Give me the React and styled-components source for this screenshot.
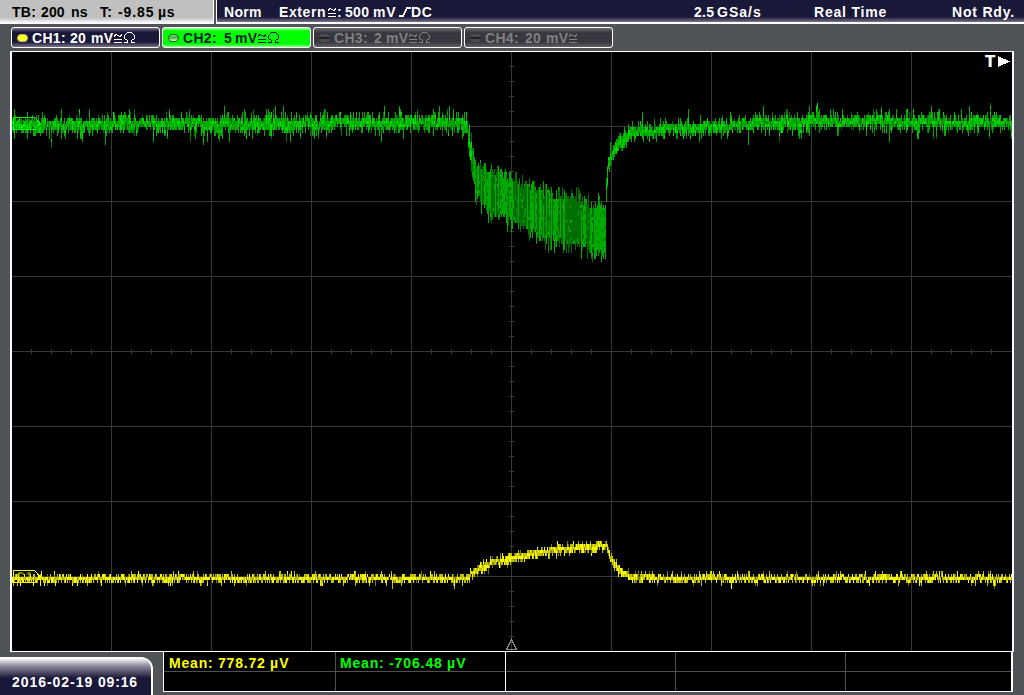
import React from 'react'
import styled, { createGlobalStyle } from 'styled-components'

const PLOT_W = 1000
const PLOT_H = 599
const LEFT = 12
const TOP = 52

// small seeded generator, so the noise is the same on every paint
const makeRandom = (seed) => {
    let s = seed
    return () => {
        s = (s * 1664525 + 1013904223) % 4294967296
        return s / 4294967296
    }
}

// [x, upper edge, lower edge]
const CH2_ENVELOPE = [
    [12, 119, 130], [464, 118, 129], [467, 121, 132], [468, 126, 148], [470, 142, 162],
    [472, 150, 178], [476, 163, 194], [480, 166, 199], [483, 167, 207], [490, 173, 211],
    [500, 176, 216], [510, 178, 217], [520, 184, 223], [527, 187, 229], [540, 192, 236],
    [556, 197, 240], [573, 199, 245], [586, 204, 248], [600, 206, 253], [604, 205, 253],
    [605, 200, 254], [606, 176, 200], [608, 161, 172], [611, 153, 163], [614, 144, 156],
    [618, 136, 148], [626, 130, 141], [640, 126, 136], [660, 125, 135], [700, 122, 132],
    [760, 119, 129], [830, 117, 127], [1012, 118, 128],
]

const CH1_ENVELOPE = [
    [12, 576, 581], [464, 576, 581], [469, 573, 579], [473, 569, 575], [480, 564, 571],
    [493, 558, 565], [510, 556, 563], [527, 552, 559], [547, 548, 555], [573, 545, 552],
    [587, 543, 550], [606, 542, 549], [608, 549, 557], [612, 558, 565], [617, 566, 573],
    [623, 571, 577], [636, 575, 581], [660, 576, 581], [1012, 576, 581],
]

const edgeAt = (envelope, x) => {
    const i = Math.max(1, envelope.findIndex((p) => p[0] >= x))
    const [x0, a0, b0] = envelope[i - 1]
    const [x1, a1, b1] = envelope[i]
    const t = (x - x0) / (x1 - x0)
    return [a0 + (a1 - a0) * t, b0 + (b1 - b0) * t]
}

const buildTrace = (envelope, seed, { spread, limit, bright }) => {
    const rnd = makeRandom(seed)
    const tail = (k) => Math.min(limit, -Math.log(rnd() + 0.001) * k)
    const paths = { dim: '', mid: '', bright: '' }
    let drift = 0
    for (let x = LEFT; x < LEFT + PLOT_W; x += 1) {
        let [a, b] = edgeAt(envelope, x)
        const wide = b - a > 24
        const k = wide ? spread * 1.6 : spread
        drift = drift * 0.6 + (rnd() - 0.5) * spread
        a += drift + rnd() * spread - tail(k)
        b += drift - rnd() * spread + tail(k)
        const start = Math.round((a - TOP) / 3) * 3
        const rows = Math.max(1, Math.round((b - a) / 3))
        const columnDim = rnd() < (wide ? 0.5 : 0.25)
        for (let r = 0; r < rows; r += 1) {
            const middle = 1 - Math.abs((r + 0.5) / rows - 0.5) * 2
            const n = rnd()
            let level = columnDim ? 'dim' : 'mid'
            if (wide) {
                if (n < 0.1) level = columnDim ? 'mid' : 'dim'
            } else if (n < middle * bright) level = 'bright'
            else if (n < 0.85 && middle > 0.4) level = 'mid'
            paths[level] += `M${x - LEFT} ${start + r * 3}h1v3h-1z`
        }
    }
    return paths
}

const ch2 = buildTrace(CH2_ENVELOPE, 77, { spread: 3.3, limit: 14, bright: 0.42 })
const ch1 = buildTrace(CH1_ENVELOPE, 1234, { spread: 1.5, limit: 6, bright: 0.8 })

const range = (n) => Array.from({ length: n }, (_, i) => i)

const Trace = ({ paths, colors }) => (
    <>
        <path d={paths.dim} fill={colors[0]} />
        <path d={paths.mid} fill={colors[1]} />
        <path d={paths.bright} fill={colors[2]} />
    </>
)

const Graticule = () => (
    <g fill="#383838">
        {range(9).map((i) => <rect key={i} x={99 + i * 100} y="0" width="1" height={PLOT_H} />)}
        {range(7).map((i) => <rect key={i} x="0" y={74 + i * 75} width={PLOT_W} height="1" />)}
        {range(39).map((i) => <rect key={i} x="497" y={14 + i * 15} width="5" height="1" />)}
        {range(49).map((i) => <rect key={i} x={19 + i * 20} y="297" width="1" height="5" />)}
    </g>
)

const ChannelTag = ({ y, color, name }) => (
    <g>
        <path d={`M1.5 ${y + 0.5}h21l5.5 6-5.5 6h-21z`} fill="none" stroke={color} />
        <text x="4" y={y + 11} fill={color} opacity="0.55" fontSize="12" letterSpacing="1" fontFamily="Liberation Sans, sans-serif">{name}</text>
    </g>
)

const Coupling = () => (
    <SignIcon width="9" height="12" viewBox="0 0 9 12">
        <path d="M0.5 5V3.5L2.5 2.5L5.5 4.5L7.5 3.5V2M0 7.5H8M0 10.5H8" />
    </SignIcon>
)

const Ohm = () => (
    <SignIcon width="13" height="12" viewBox="0 0 13 12">
        <path d="M1 10.5H4.5V8.5L1.5 6.5V3.5L4.5 0.5H8.5L11.5 3.5V6.5L8.5 8.5V10.5H12" />
    </SignIcon>
)

const channels = [
    { name: 'CH1:', value: '20', kind: 'ch1', nameW: 38, valueW: 21, ohm: true },
    { name: 'CH2:', value: '5', kind: 'ch2', nameW: 41, valueW: 11, ohm: true },
    { name: 'CH3:', value: '2', kind: 'off', nameW: 40, valueW: 12, ohm: true },
    { name: 'CH4:', value: '20', kind: 'off', nameW: 40, valueW: 21, ohm: false },
]

const Channel = ({ name, value, kind, nameW, valueW, ohm }) => (
    <ChannelButton $kind={kind}>
        <Led $kind={kind} />
        <Word $w={nameW}>{name}</Word>
        <Word $w={valueW}>{value}</Word>
        <Word $w={23}>mV</Word>
        <Coupling />
        {ohm && <Ohm />}
    </ChannelButton>
)

export default function App() {
    return (
        <Screen>
            <GlobalStyle />
            <TopBar>
                <TimeBase>
                    <Word $w={29}>TB:</Word>
                    <Word $w={30} $gap={0.1}>200</Word>
                    <Word $w={29} $gap={0.1}>ns</Word>
                    <Word $w={18}>T:</Word>
                    <Word $w={40} $gap={0.9}>-9.85</Word>
                    <Word $w={20} $gap={0.7}>µs</Word>
                </TimeBase>
                <TriggerBar>
                    <Word $w={55}>Norm</Word>
                    <Word $w={49} $gap={0.6}>Extern</Word>
                    <Coupling />
                    <Word $w={8}>:</Word>
                    <Word $w={28}>500</Word>
                    <Word $w={26} $gap={0.8}>mV</Word>
                    <SignIcon width="12" height="12" viewBox="0 0 12 12" $bold>
                        <path d="M0 10H4L8 2H12" />
                    </SignIcon>
                    <Word $w={283} $gap={0.7}>DC</Word>
                    <Word $w={23}>2.5</Word>
                    <Word $w={97} $gap={1}>GSa/s</Word>
                    <Word $w={138} $gap={0.8}>Real Time</Word>
                    <Word $w={66} $gap={0.8}>Not Rdy.</Word>
                </TriggerBar>
            </TopBar>
            <ChannelRow>
                {channels.map((c) => <Channel key={c.name} {...c} />)}
            </ChannelRow>
            <PlotFrame>
                <svg width={PLOT_W} height={PLOT_H} shapeRendering="crispEdges">
                    <Graticule />
                    <Trace paths={ch2} colors={['#006e00', '#00aa00', '#00dc00']} />
                    <Trace paths={ch1} colors={['#787800', '#bebe00', '#fafa00']} />
                    <ChannelTag y={65} color="#00ff00" name="C2" />
                    <ChannelTag y={518} color="#ffff00" name="C1" />
                    <path d="M499.5 587.5L504.5 597.5H494.5Z" fill="none" stroke="#8c8c8c" />
                    <text x="973" y="15" fill="#fff" fontSize="15" fontWeight="bold" fontFamily="DejaVu Sans, sans-serif">T</text>
                    <path d="M986 4L998 9.5L986 15Z" fill="#fff" />
                </svg>
            </PlotFrame>
            <Footer>
                <Clock>
                    <Word $w={86} $gap={0.95}>2016-02-19</Word>
                    <Word $w={40} $gap={0.8}>09:16</Word>
                </Clock>
                <Results>
                    <Cell $color="#ffff00">
                        <Word $w={49} $gap={0.8}>Mean:</Word>
                        <Word $w={52} $gap={0.8}>778.72</Word>
                        <Word $w={20} $gap={1.2}>µV</Word>
                    </Cell>
                    <Cell $color="#00ff00" $strong>
                        <Word $w={49} $gap={0.8}>Mean:</Word>
                        <Word $w={58} $gap={0.9}>-706.48</Word>
                        <Word $w={20} $gap={1.2}>µV</Word>
                    </Cell>
                    <Cell />
                    <Cell />
                    <Cell $last />
                    <Cell $bottom />
                    <Cell $bottom $strong />
                    <Cell $bottom />
                    <Cell $bottom />
                    <Cell $bottom $last />
                </Results>
            </Footer>
        </Screen>
    )
}

const GlobalStyle = createGlobalStyle`
    body {
        margin: 0;
        background: #505458;
        overflow: hidden;
    }
    * {
        box-sizing: border-box;
    }
`

const Screen = styled.div`
    width: 1024px;
    height: 695px;
    display: flex;
    flex-direction: column;
    background: #505458;
    color: #fff;
    font: bold 14px/14px 'Liberation Sans', Arial, sans-serif;
    overflow: hidden;
`

const Word = styled.span`
    flex: 0 0 ${({ $w }) => $w}px;
    width: ${({ $w }) => $w}px;
    letter-spacing: ${({ $gap = 0.3 }) => $gap}px;
    white-space: pre;
`

const TopBar = styled.div`
    display: flex;
    flex: 0 0 24px;
`

const TimeBase = styled.div`
    display: flex;
    width: 214px;
    padding: 5px 0 0 12px;
    color: #000;
    background: linear-gradient(#c0c0c0 18px, #fff 23px);
    border-right: 1px solid #fff;
    margin-right: 2px;
`

const TriggerBar = styled.div`
    display: flex;
    flex: 1;
    padding: 5px 0 0 7px;
    border-left: 1px solid #fff;
    background: linear-gradient(#1a1838 17px, #77758a 22px, #fff 22px);
`

const SignIcon = styled.svg`
    flex: none;
    margin-top: 1px;
    fill: none;
    stroke: currentColor;
    stroke-width: ${({ $bold }) => ($bold ? 2 : 1)};
    shape-rendering: crispEdges;
`

const ChannelRow = styled.div`
    display: flex;
    gap: 2px;
    flex: 0 0 27px;
    padding: 3px 0 0 11px;
`

const fills = {
    ch1: 'linear-gradient(#77758a, #1a1838 4px, #1a1838 14px, #77758a)',
    ch2: 'linear-gradient(#b0ffb0, #00ff00 3px, #00ff00 16px, #90ff90)',
    off: 'linear-gradient(#66666a, #38373f 5px, #38373f 14px, #606066)',
}

const leds = {
    ch1: 'background: #ffff30; border: 1px solid #c0b850;',
    ch2: 'background: linear-gradient(#8ade8a, #40b040 45%, #e0ffe0); border: 1px solid #245c24;',
    off: 'background: linear-gradient(#4c4c4c 35%, #222 35%, #222 65%, #4c4c4c 65%);',
}

const ChannelButton = styled.div`
    display: flex;
    width: 149px;
    height: 21px;
    padding: 3px 0 0 5px;
    color: ${({ $kind }) => ({ ch1: '#fff', ch2: '#1a1838', off: '#808080' })[$kind]};
    background: ${({ $kind }) => fills[$kind]};
    border: 1px solid #fff;
    border-radius: 3px;
`

const Led = styled.span`
    flex: none;
    width: 11px;
    height: 8px;
    margin: 3px 4px 0 0;
    border-radius: 4px;
    ${({ $kind }) => leds[$kind]}
`

const PlotFrame = styled.div`
    flex: 0 0 601px;
    width: 1004px;
    margin-left: 10px;
    background: #000;
    border: solid #fff;
    border-width: 1px 2px;
    svg {
        display: block;
    }
`

const Footer = styled.div`
    display: flex;
    height: 43px;
`

const Clock = styled.div`
    display: flex;
    width: 153px;
    height: 38px;
    margin-top: 5px;
    padding: 17px 0 0 12px;
    background: linear-gradient(#fff, #8c8a9c 8px, #1a1838 20px);
    border-top: 1px solid #fff;
    border-right: 2px solid #fff;
    border-radius: 0 12px 0 0;
`

const Results = styled.div`
    display: grid;
    grid-template-columns: 172px 170px 170px 170px 165px;
    grid-template-rows: 20px 19px;
    width: 850px;
    height: 40px;
    margin-left: 10px;
    background: #000;
    border: 1px solid #fff;
    border-top: 0;
    border-right-width: 2px;
`

const Cell = styled.div`
    display: flex;
    padding: 4px 0 0 ${({ $strong }) => ($strong ? 4 : 5)}px;
    color: ${({ $color }) => $color || '#fff'};
    border-right: ${({ $last, $strong }) => ($last ? 'none' : `1px solid ${$strong ? '#fff' : '#505050'}`)};
    border-bottom: ${({ $bottom }) => ($bottom ? 'none' : '1px solid #505050')};
`
